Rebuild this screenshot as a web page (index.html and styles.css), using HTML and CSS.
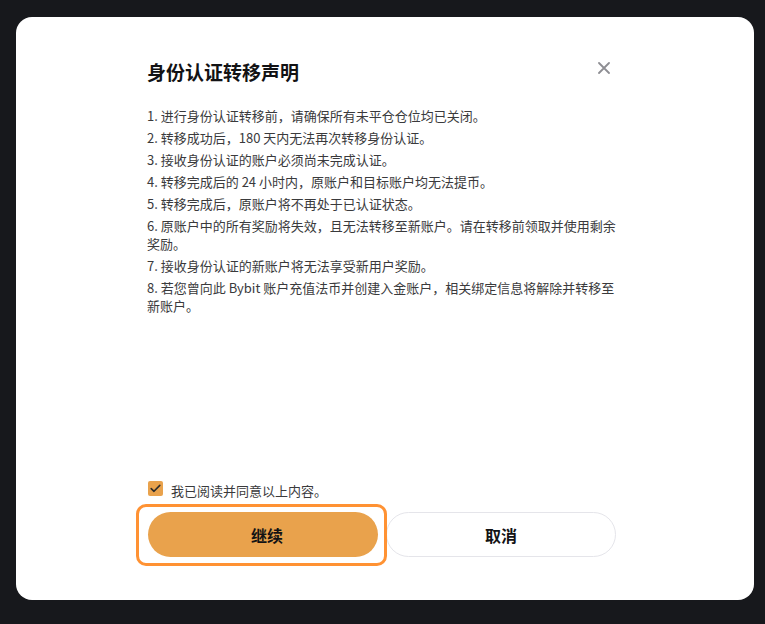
FILE: index.html
```html
<!DOCTYPE html>
<html lang="zh-CN">
<head>
<meta charset="UTF-8">
<meta name="viewport" content="width=device-width, initial-scale=1.0">
<title>身份认证转移声明</title>
<link rel="stylesheet" href="styles.css">
</head>
<body>
<div class="modal">
    <div class="modal-header">
        <h2 class="modal-title">身份认证转移声明</h2>
        <button class="close-btn" aria-label="关闭">
            <svg width="12" height="12" viewBox="0 0 12 12"><path d="M1 1L11 11M11 1L1 11" stroke="#8e8e93" stroke-width="1.8" stroke-linecap="round"/></svg>
        </button>
    </div>

    <ul class="terms">
        <li>1. 进行身份认证转移前，请确保所有未平仓仓位均已关闭。</li>
        <li>2. 转移成功后，180 天内无法再次转移身份认证。</li>
        <li>3. 接收身份认证的账户必须尚未完成认证。</li>
        <li>4. 转移完成后的 24 小时内，原账户和目标账户均无法提币。</li>
        <li>5. 转移完成后，原账户将不再处于已认证状态。</li>
        <li>6. 原账户中的所有奖励将失效，且无法转移至新账户。请在转移前领取并使用剩余奖励。</li>
        <li>7. 接收身份认证的新账户将无法享受新用户奖励。</li>
        <li>8. 若您曾向此 Bybit 账户充值法币并创建入金账户，相关绑定信息将解除并转移至新账户。</li>
    </ul>

    <div class="modal-footer">
        <label class="agree">
            <span class="checkbox">
                <svg width="11" height="9" viewBox="0 0 11 9"><path d="M1.2 4.6L4 7.3L9.8 1.4" fill="none" stroke="#2b2b2b" stroke-width="1.6" stroke-linecap="round" stroke-linejoin="round"/></svg>
            </span>
            我已阅读并同意以上内容。
        </label>
        <div class="actions">
            <div class="btn-wrap">
                <span class="focus-ring"></span>
                <button class="btn btn-primary">继续</button>
            </div>
            <button class="btn btn-secondary">取消</button>
        </div>
    </div>
</div>
</body>
</html>
```

FILE: styles.css
```css
body {
    margin: 0;
    background-color: #17181c;
    font-family: "Noto Sans CJK SC", "Noto Sans", sans-serif;
    height: 624px;
    overflow: hidden;
}
.modal {
    box-sizing: border-box;
    width: 738px;
    height: 583px;
    margin: 17px 0 0 16px;
    background-color: #fff;
    border-radius: 16px;
    padding: 42px 138px 43px 132px;
    display: flex;
    flex-direction: column;
}
.modal-header {
    display: flex;
    justify-content: space-between;
    align-items: center;
}
.modal-title {
    margin: 0 0 0 -1px;
    font-size: 19px;
    line-height: 26px;
    font-weight: 700;
    color: #121214;
}
.close-btn {
    width: 20px;
    height: 20px;
    padding: 0;
    margin: -8px 2px 0 0;
    border: none;
    background: none;
    display: flex;
    align-items: center;
    justify-content: center;
    cursor: pointer;
}
.terms {
    list-style: none;
    margin: 22px 0 0 -1px;
    padding: 0;
    font-size: 13px;
    line-height: 18px;
    color: #3a3a3c;
}
.terms li {
    margin-bottom: 4px;
}
.modal-footer {
    margin-top: auto;
    position: relative;
}
.agree {
    position: relative;
    z-index: 1;
    display: flex;
    align-items: center;
    gap: 8px;
    height: 18px;
    font-size: 13px;
    color: #3a3a3c;
    margin-bottom: 13px;
}
.checkbox {
    width: 15px;
    height: 15px;
    border-radius: 2px;
    background-color: #e9a24c;
    display: flex;
    align-items: center;
    justify-content: center;
    margin-top: -3px;
}
.actions {
    display: grid;
    grid-template-columns: 1fr 1fr;
    gap: 8px;
}
.btn-wrap {
    position: relative;
    display: flex;
}
.focus-ring {
    position: absolute;
    left: -12px;
    right: -9px;
    top: -8px;
    bottom: -9px;
    border: 3px solid #ff9233;
    border-radius: 10px;
}
.btn {
    width: 100%;
    height: 45px;
    padding: 0;
    border-radius: 23px;
    font-family: inherit;
    font-size: 16px;
    font-weight: 700;
    color: #121214;
    cursor: pointer;
}
.btn-primary {
    position: relative;
    padding-left: 8px;
    background-color: #e9a24c;
    border: none;
}
.btn-secondary {
    background-color: #fff;
    border: 1px solid #e5e5ea;
}
```
